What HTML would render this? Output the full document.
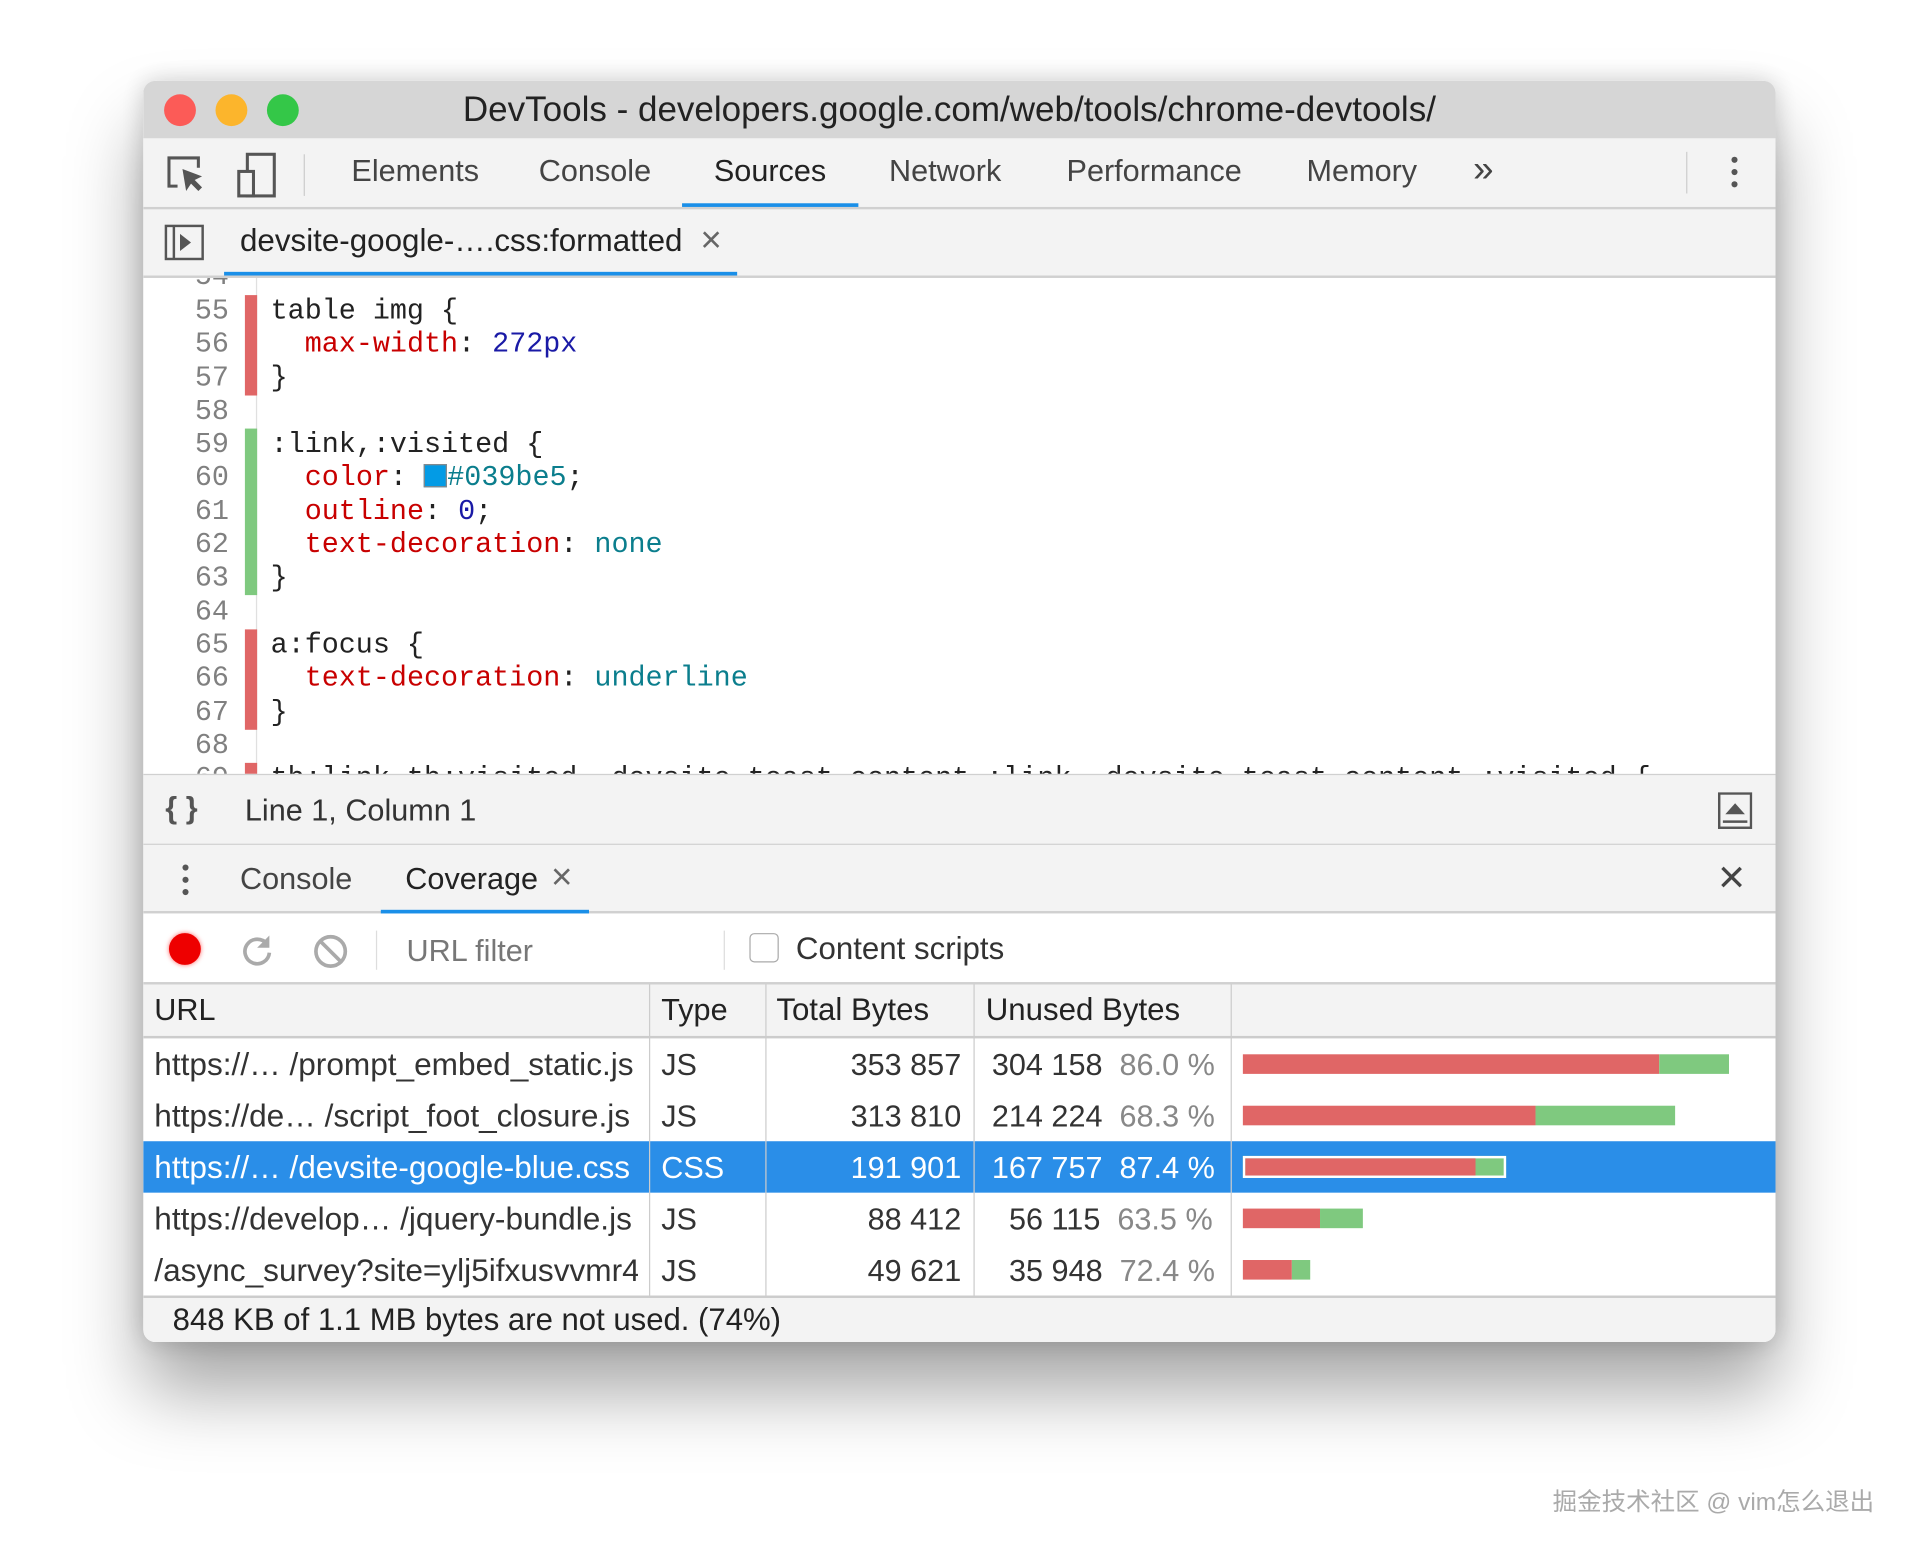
<!DOCTYPE html>
<html><head><meta charset="utf-8"><style>
html,body{margin:0;padding:0;background:#fff;width:1920px;height:1549px;overflow:hidden}
#s{position:absolute;left:0;top:0;width:1568px;height:1265px;transform:scale(1.2245);transform-origin:0 0;font-family:"Liberation Sans",sans-serif;color:#333}
.a{position:absolute}
.win{left:117px;top:66px;width:1333px;height:1030px;border-radius:10px;overflow:hidden;background:#fff;box-shadow:0 40px 60px rgba(0,0,0,.35),0 0 20px rgba(0,0,0,.18)}
.t{font-size:25px;white-space:nowrap}
.mono{font-family:"Liberation Mono","DejaVu Sans Mono",monospace;font-size:23.2px;white-space:pre}
.ln{color:#808080;text-align:right;width:70px;left:0}
.k{color:#c80000}.v{color:#1a1aa6}.c{color:#0b7e8d}
.row{position:absolute;left:0;width:1333px;height:42px;font-size:25px}
.row div{position:absolute;top:8px;white-space:nowrap}
.u{font-size:25.8px}
</style></head><body><div id="s">
<div class="a win">
 <div class="a" style="left:0;top:0;width:1333px;height:47px;background:#d6d6d6"></div>
 <div class="a" style="left:17px;top:11px;width:26px;height:26px;border-radius:50%;background:#fc5b57"></div>
 <div class="a" style="left:59px;top:11px;width:26px;height:26px;border-radius:50%;background:#fcb52c"></div>
 <div class="a" style="left:101px;top:11px;width:26px;height:26px;border-radius:50%;background:#34c748"></div>
 <div class="a t" style="left:261px;top:8px;font-size:28.6px;color:#222">DevTools - developers.google.com/web/tools/chrome-devtools/</div>
 <div class="a" style="left:0;top:47px;width:1333px;height:56px;background:#f3f3f3;border-bottom:2px solid #d0d0d0"></div>
 <svg class="a" style="left:18px;top:60px" width="36" height="34" viewBox="0 0 36 34"><path d="M10 26H3V3h24v8" fill="none" stroke="#555" stroke-width="2.5"/><path d="M14 12l3 18 4-6 6 6 3-3-6-6 6-3z" fill="#555"/></svg>
 <svg class="a" style="left:76px;top:58px" width="34" height="38" viewBox="0 0 34 38"><rect x="9" y="2" width="22" height="34" fill="none" stroke="#555" stroke-width="2.5"/><rect x="2" y="16" width="12" height="20" fill="#f3f3f3" stroke="#555" stroke-width="2.5"/></svg>
 <div class="a" style="left:131px;top:60px;width:1px;height:34px;background:#ccc"></div>
 <div class="a t" style="left:170px;top:60px;color:#444">Elements</div>
 <div class="a t" style="left:323px;top:60px;color:#444">Console</div>
 <div class="a t" style="left:466px;top:60px;color:#222">Sources</div>
 <div class="a" style="left:440px;top:100px;width:144px;height:3px;background:#1a8fe8"></div>
 <div class="a t" style="left:609px;top:60px;color:#444">Network</div>
 <div class="a t" style="left:754px;top:60px;color:#444">Performance</div>
 <div class="a t" style="left:950px;top:60px;color:#444">Memory</div>
 <div class="a t" style="left:1086px;top:56px;color:#444;font-size:30px">»</div>
 <div class="a" style="left:1260px;top:58px;width:1px;height:34px;background:#ccc"></div>
 <div class="a" style="left:1297px;top:62px;width:5px;height:5px;border-radius:50%;background:#555;box-shadow:0 10px 0 #555,0 20px 0 #555"></div>
 <div class="a" style="left:0;top:105px;width:1333px;height:54px;background:#f3f3f3;border-bottom:2px solid #d0d0d0"></div>
 <svg class="a" style="left:17px;top:117px" width="34" height="30" viewBox="0 0 34 30"><rect x="1.5" y="1.5" width="30" height="27" fill="none" stroke="#555" stroke-width="2"/><line x1="8" y1="2" x2="8" y2="28" stroke="#555" stroke-width="2"/><path d="M13 8v14l9-7z" fill="#555"/></svg>
 <div class="a t" style="left:79px;top:117px;color:#222;font-size:25.6px">devsite-google-….css:formatted</div>
 <div class="a t" style="left:455px;top:114px;color:#666;font-size:30px">×</div>
 <div class="a" style="left:66px;top:156px;width:419px;height:3px;background:#1a8fe8"></div>
 <div class="a" style="left:0;top:161px;width:1333px;height:405px;background:#fff;overflow:hidden">
  <div class="a" style="left:92px;top:0;width:1px;height:405px;background:#e0e0e0"></div>
  <div class="a mono ln" style="top:-14px">54</div>
  <div class="a" style="left:83px;top:14px;width:10px;height:82px;background:#e06666"></div>
  <div class="a" style="left:83px;top:123px;width:10px;height:136px;background:#7fc97f"></div>
  <div class="a" style="left:83px;top:287px;width:10px;height:82px;background:#e06666"></div>
  <div class="a" style="left:83px;top:396px;width:10px;height:10px;background:#e06666"></div>
  <div class="a mono ln" style="top:14px;line-height:27.3px">55
56
57
58
59
60
61
62
63
64
65
66
67
68
69</div>
  <div class="a mono" style="left:104px;top:14px;line-height:27.3px;color:#222">table img {
  <span class="k">max-width</span>: <span class="v">272px</span>
}

:link,:visited {
  <span class="k">color</span>: <span style="display:inline-block;width:17px;height:17px;background:#039be5;vertical-align:-2px;border:1px solid #888"></span><span class="c">#039be5</span>;
  <span class="k">outline</span>: <span class="v">0</span>;
  <span class="k">text-decoration</span>: <span class="c">none</span>
}

a:focus {
  <span class="k">text-decoration</span>: <span class="c">underline</span>
}

th:link,th:visited,.devsite-toast-content :link,.devsite-toast-content :visited {</div>
 </div>
 <div class="a" style="left:0;top:566px;width:1333px;height:56px;background:#f3f3f3;border-top:1px solid #d0d0d0;border-bottom:2px solid #d0d0d0"></div>
 <div class="a t" style="left:18px;top:580px;color:#555;font-weight:bold">{ }</div>
 <div class="a t" style="left:83px;top:582px;color:#333">Line 1, Column 1</div>
 <svg class="a" style="left:1286px;top:581px" width="28" height="30" viewBox="0 0 28 30"><rect x="1" y="1" width="26" height="28" fill="none" stroke="#555" stroke-width="2"/><path d="M6 18l8-9 8 9z" fill="#555"/><line x1="4" y1="24" x2="24" y2="24" stroke="#555" stroke-width="2"/></svg>
 <div class="a" style="left:0;top:624px;width:1333px;height:54px;background:#f3f3f3;border-bottom:2px solid #d0d0d0"></div>
 <div class="a" style="left:32px;top:640px;width:5px;height:5px;border-radius:50%;background:#555;box-shadow:0 10px 0 #555,0 20px 0 #555"></div>
 <div class="a t" style="left:79px;top:638px;color:#444">Console</div>
 <div class="a t" style="left:214px;top:638px;color:#222">Coverage</div>
 <div class="a t" style="left:333px;top:634px;color:#666;font-size:30px">×</div>
 <div class="a" style="left:194px;top:677px;width:170px;height:3px;background:#1a8fe8"></div>
 <div class="a t" style="left:1286px;top:630px;color:#444;font-size:38px">×</div>
 <div class="a" style="left:0;top:680px;width:1333px;height:56px;background:#fff;border-bottom:2px solid #d0d0d0"></div>
 <div class="a" style="left:21px;top:696px;width:26px;height:26px;border-radius:50%;background:#e00;box-shadow:0 0 4px #f66"></div>
 <svg class="a" style="left:79px;top:696px" width="28" height="28" viewBox="0 0 28 28"><path d="M22 9A10 10 0 1 0 24 16" fill="none" stroke="#aaa" stroke-width="3"/><path d="M24 2v10h-10z" fill="#aaa"/></svg>
 <svg class="a" style="left:138px;top:696px" width="30" height="30" viewBox="0 0 30 30"><circle cx="15" cy="15" r="12" fill="none" stroke="#aaa" stroke-width="3"/><line x1="7" y1="7" x2="23" y2="23" stroke="#aaa" stroke-width="3"/></svg>
 <div class="a" style="left:190px;top:694px;width:1px;height:32px;background:#ddd"></div>
 <div class="a t" style="left:215px;top:697px;color:#777">URL filter</div>
 <div class="a" style="left:474px;top:694px;width:1px;height:32px;background:#ddd"></div>
 <div class="a" style="left:495px;top:696px;width:22px;height:22px;border:1.5px solid #aaa;border-radius:4px"></div>
 <div class="a t" style="left:533px;top:695px;color:#333;font-size:25.5px">Content scripts</div>
 <div class="a" style="left:0;top:738px;width:1333px;height:42px;background:#f3f3f3;border-bottom:2px solid #ccc"></div>
 <div class="a t" style="left:9px;top:745px;color:#222">URL</div>
 <div class="a t" style="left:423px;top:745px;color:#222">Type</div>
 <div class="a t" style="left:517px;top:745px;color:#222;font-size:25.5px">Total Bytes</div>
 <div class="a t" style="left:688px;top:745px;color:#222;font-size:25.5px">Unused Bytes</div>
 <div class="row" style="top:782px"><div class="u" style="left:9px">https://… /prompt_embed_static.js</div><div style="left:423px">JS</div><div style="right:665px">353 857</div><div style="left:693px">304 158 <span style="color:#888">&nbsp;86.0 %</span></div>
  <span class="a" style="left:898px;top:13px;width:340px;height:16px;background:#e06666"></span><span class="a" style="left:1238px;top:13px;width:57px;height:16px;background:#7fc97f"></span></div>
 <div class="row" style="top:824px"><div class="u" style="left:9px">https://de…  /script_foot_closure.js</div><div style="left:423px">JS</div><div style="right:665px">313 810</div><div style="left:693px">214 224 <span style="color:#888">&nbsp;68.3 %</span></div>
  <span class="a" style="left:898px;top:13px;width:239px;height:16px;background:#e06666"></span><span class="a" style="left:1137px;top:13px;width:114px;height:16px;background:#7fc97f"></span></div>
 <div class="row" style="top:866px;background:#2a8ee8;color:#fff"><div class="u" style="left:9px">https://… /devsite-google-blue.css</div><div style="left:423px">CSS</div><div style="right:665px">191 901</div><div style="left:693px">167 757 &nbsp;87.4 %</div>
  <span class="a" style="left:898px;top:12px;width:211px;height:14px;border:2px solid #fff;background:#7fc97f"></span><span class="a" style="left:900px;top:14px;width:188px;height:14px;background:#e06666"></span></div>
 <div class="row" style="top:908px"><div class="u" style="left:9px">https://develop… /jquery-bundle.js</div><div style="left:423px">JS</div><div style="right:665px">88 412</div><div style="left:707px">56 115 <span style="color:#888">&nbsp;63.5 %</span></div>
  <span class="a" style="left:898px;top:13px;width:63px;height:16px;background:#e06666"></span><span class="a" style="left:961px;top:13px;width:35px;height:16px;background:#7fc97f"></span></div>
 <div class="row" style="top:950px"><div class="u" style="left:9px;width:395px;overflow:hidden">/async_survey?site=ylj5ifxusvvmr4p</div><div style="left:423px">JS</div><div style="right:665px">49 621</div><div style="left:707px">35 948 <span style="color:#888">&nbsp;72.4 %</span></div>
  <span class="a" style="left:898px;top:13px;width:40px;height:16px;background:#e06666"></span><span class="a" style="left:938px;top:13px;width:15px;height:16px;background:#7fc97f"></span></div>
 <div class="a" style="left:413px;top:738px;width:1px;height:254px;background:#ccc"></div>
 <div class="a" style="left:508px;top:738px;width:1px;height:254px;background:#ccc"></div>
 <div class="a" style="left:678px;top:738px;width:1px;height:254px;background:#ccc"></div>
 <div class="a" style="left:888px;top:738px;width:1px;height:254px;background:#ccc"></div>
 <div class="a" style="left:0;top:992px;width:1333px;height:38px;background:#f3f3f3;border-top:2px solid #ccc"></div>
 <div class="a t" style="left:24px;top:998px;color:#222;font-size:25.4px">848 KB of 1.1 MB bytes are not used. (74%)</div>
</div>
<div class="a" style="left:1268px;top:1210px;font-size:20px;color:#aaa;font-family:'Liberation Sans','Noto Sans CJK SC',sans-serif;white-space:nowrap">掘金技术社区 @ vim怎么退出</div>
</div></body></html>
